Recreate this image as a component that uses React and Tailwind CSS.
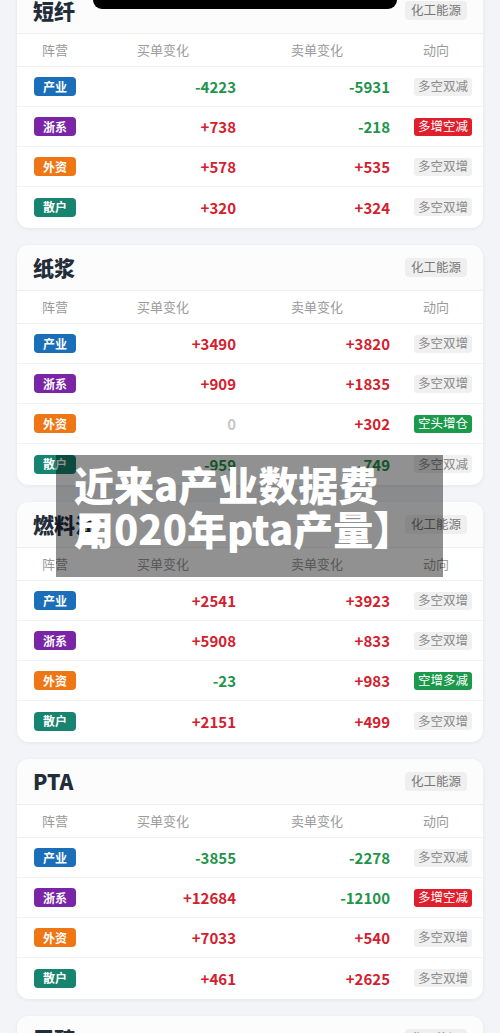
import React from "react";

const BADGE = {
  产业: "bg-[#1a6fb8]",
  浙系: "bg-[#7a25a6]",
  外资: "bg-[#ef7615]",
  散户: "bg-[#16846e]",
};

const cards = [
  {
    title: "短纤",
    rows: [
      ["产业", "-4223", "-5931", "多空双减", "gray"],
      ["浙系", "+738", "-218", "多增空减", "red"],
      ["外资", "+578", "+535", "多空双增", "gray"],
      ["散户", "+320", "+324", "多空双增", "gray"],
    ],
  },
  {
    title: "纸浆",
    rows: [
      ["产业", "+3490", "+3820", "多空双增", "gray"],
      ["浙系", "+909", "+1835", "多空双增", "gray"],
      ["外资", "0", "+302", "空头增仓", "green"],
      ["散户", "-959", "-749", "多空双减", "gray"],
    ],
  },
  {
    title: "燃料油",
    rows: [
      ["产业", "+2541", "+3923", "多空双增", "gray"],
      ["浙系", "+5908", "+833", "多空双增", "gray"],
      ["外资", "-23", "+983", "空增多减", "green"],
      ["散户", "+2151", "+499", "多空双增", "gray"],
    ],
  },
  {
    title: "PTA",
    rows: [
      ["产业", "-3855", "-2278", "多空双减", "gray"],
      ["浙系", "+12684", "-12100", "多增空减", "red"],
      ["外资", "+7033", "+540", "多空双增", "gray"],
      ["散户", "+461", "+2625", "多空双增", "gray"],
    ],
  },
  {
    title: "甲醇",
    rows: [
      ["产业", "+1200", "+980", "多空双增", "gray"],
      ["浙系", "+300", "+210", "多空双增", "gray"],
      ["外资", "-120", "-80", "多空双减", "gray"],
      ["散户", "+90", "+60", "多空双增", "gray"],
    ],
  },
];

function numClass(v) {
  if (v === "0") return "text-[#c8c8c8]";
  if (v.startsWith("-")) return "text-[#1f944b]";
  return "text-[#d3202e]";
}

function tagClass(t) {
  if (t === "red") return "bg-[#e01f2d] text-white";
  if (t === "green") return "bg-[#1c9a4c] text-white";
  return "bg-[#f0f0f0] text-[#8a8a8a]";
}

function Card({ card }) {
  return (
    <div className="h-[240px] shrink-0 rounded-[12px] bg-white shadow-[0_1px_4px_rgba(0,0,0,0.06)] overflow-hidden">
      <div className="h-[46px] flex items-center justify-between pl-[16px] pr-[16px] bg-[#fcfcfd] border-b border-[#efefef]">
        <div className="text-[21px] font-black text-[#232d3a] leading-none">{card.title}</div>
        <div className="h-[19px] px-[6px] flex items-center rounded-[4px] bg-[#efefef] text-[12.5px] text-[#777] leading-none">
          化工能源
        </div>
      </div>
      <div className="h-[33px] flex items-center border-b border-[#f0f0f0] text-[13px] text-[#9a9a9a]">
        <div className="w-[76px] text-center">阵营</div>
        <div className="w-[147px] text-center pr-[7px]">买单变化</div>
        <div className="w-[154px] text-center">卖单变化</div>
        <div className="flex-1 pl-[29px]">动向</div>
      </div>
      {card.rows.map((r, i) => (
        <div
          key={i}
          className={
            "h-[40px] flex items-center " + (i < 3 ? "border-b border-[#f3f3f3]" : "")
          }
        >
          <div className="w-[76px] flex justify-center">
            <div
              className={
                "w-[42px] h-[19px] rounded-[4px] flex items-center justify-center text-[12px] font-bold text-white leading-none " +
                BADGE[r[0]]
              }
            >
              {r[0]}
            </div>
          </div>
          <div className={"w-[147px] text-right pr-[4px] text-[15px] font-bold leading-none " + numClass(r[1])}>
            {r[1]}
          </div>
          <div className={"w-[154px] text-right pr-[4px] text-[15px] font-bold leading-none " + numClass(r[2])}>
            {r[2]}
          </div>
          <div className="flex-1 pl-[20px] flex items-center">
            <div
              className={
                "flex h-[18px] items-center px-[4px] rounded-[3px] text-[12.5px] leading-none " +
                tagClass(r[4])
              }
            >
              {r[3]}
            </div>
          </div>
        </div>
      ))}
    </div>
  );
}

export default function App() {
  return (
    <div
      className="relative w-[500px] h-[1033px] overflow-hidden bg-[#f3f4f7]"
      style={{ fontFamily: '"Noto Sans CJK SC", "Noto Sans", sans-serif' }}
    >
      <div className="flex flex-col gap-[17px] px-[17px] -mt-[12px]">
        {cards.map((c, i) => (
          <Card key={i} card={c} />
        ))}
      </div>

      <div className="absolute top-0 left-[93px] w-[304px] h-[9px] bg-black rounded-b-[14px]" />

      <div className="absolute left-[56px] top-[455px] w-[387px] h-[122px] bg-[rgba(0,0,0,0.43)] pl-[18px] pt-[7px]">
        <div className="relative text-white font-black text-[40px] leading-[44px]">
          <div className="relative whitespace-nowrap">
            近来a产业数据费
            <span className="absolute left-[40px] top-0 opacity-90">来</span>
          </div>
          <div className="relative whitespace-nowrap">
            用020年pta产量】
            <span className="absolute left-[6px] top-0">2</span>
          </div>
        </div>
      </div>
    </div>
  );
}
